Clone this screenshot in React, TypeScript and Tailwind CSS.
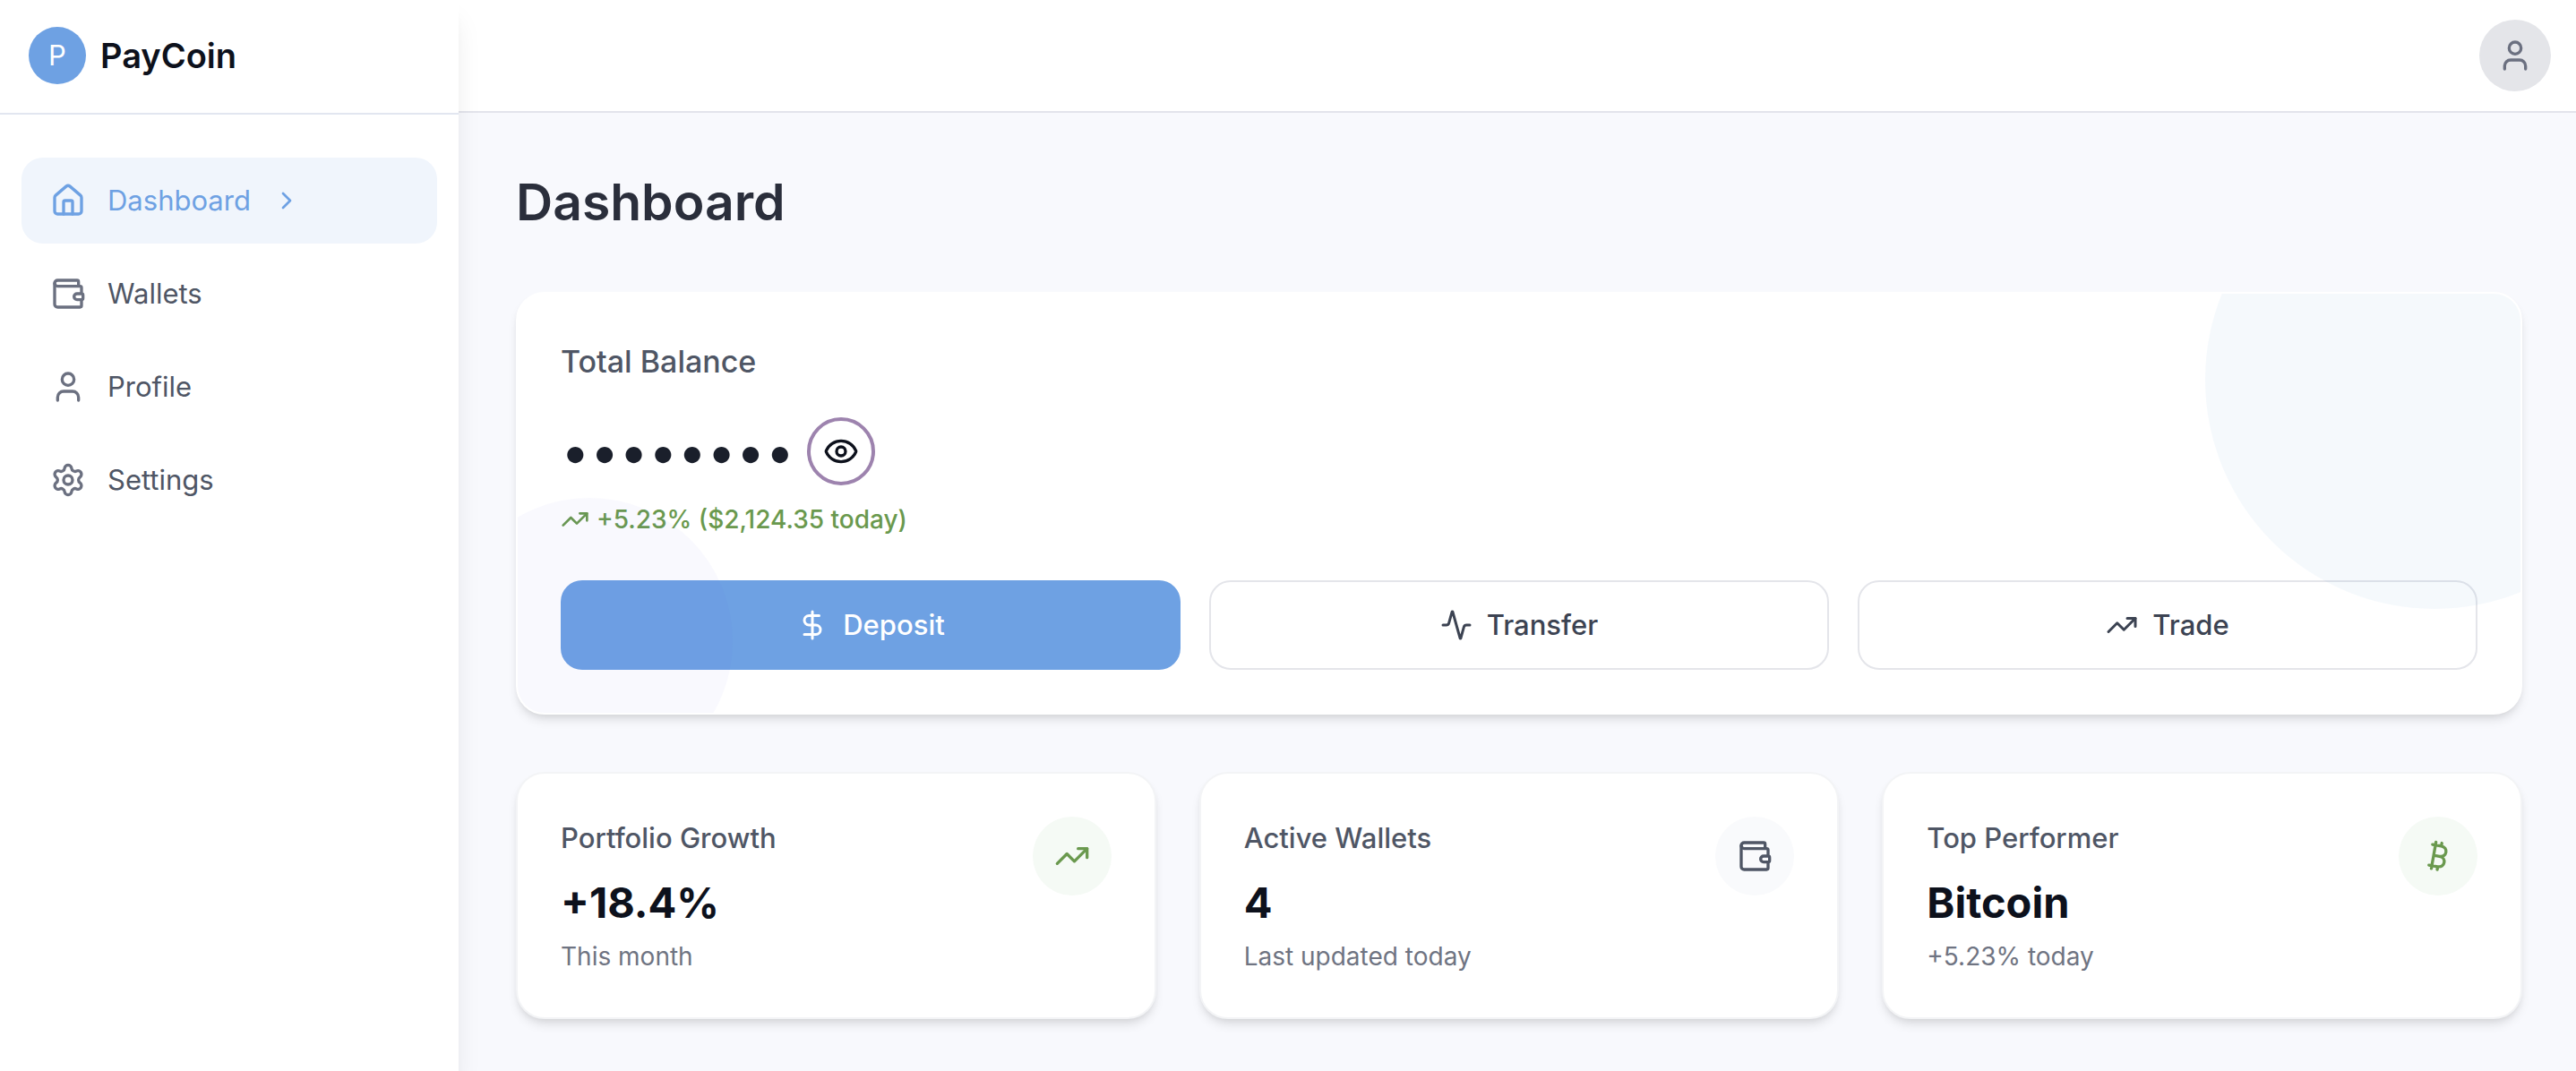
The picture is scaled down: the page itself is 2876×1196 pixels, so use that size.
import { useState } from "react";
import type { ReactNode } from "react";
import {
  Activity,
  Bitcoin,
  ChevronRight,
  DollarSign,
  Eye,
  House,
  Settings,
  TrendingUp,
  User,
  Wallet,
} from "lucide-react";
import type { LucideIcon } from "lucide-react";

type NavItem = { label: string; icon: LucideIcon; active?: boolean };

const navItems: NavItem[] = [
  { label: "Dashboard", icon: House, active: true },
  { label: "Wallets", icon: Wallet },
  { label: "Profile", icon: User },
  { label: "Settings", icon: Settings },
];

function NavLink({ label, icon: Icon, active }: NavItem) {
  return (
    <a
      href="#"
      aria-current={active ? "page" : undefined}
      className={
        active
          ? "flex h-24 items-center rounded-3xl bg-[#f0f5fc] px-8 text-[#6ea1e3]"
          : "flex h-24 items-center rounded-3xl px-8 text-[#4f5665]"
      }
    >
      <Icon className={active ? "size-10" : "size-10 text-[#6b7080]"} />
      <span className="ml-6 text-[31px] leading-12">{label}</span>
      {active && <ChevronRight className="ml-6 size-8" />}
    </a>
  );
}

function Sidebar() {
  return (
    <aside className="z-10 w-[512px] shrink-0 bg-white shadow-[0_20px_30px_-6px_rgba(0,0,0,0.1),0_8px_12px_-8px_rgba(0,0,0,0.1)]">
      <div className="flex items-center gap-4 border-b-2 border-[#e2e6f0] px-8 pt-[30px] pb-8">
        <span className="flex size-16 items-center justify-center rounded-full bg-[#6ea1e3] text-[31px] leading-12 text-white">
          P
        </span>
        <span className="text-[38px] leading-14 font-semibold text-[#0d111c]">PayCoin</span>
      </div>
      <nav className="flex flex-col gap-2 px-6 py-12">
        {navItems.map((item) => (
          <NavLink key={item.label} {...item} />
        ))}
      </nav>
    </aside>
  );
}

function ActionButton({
  icon: Icon,
  primary,
  children,
}: {
  icon: LucideIcon;
  primary?: boolean;
  children: ReactNode;
}) {
  return (
    <button
      type="button"
      className={
        primary
          ? "flex h-[100px] items-center justify-center gap-4 rounded-3xl bg-[#6ea1e3] text-[31px] leading-12 font-medium text-white"
          : "flex h-[100px] items-center justify-center gap-4 rounded-3xl border-2 border-[#e4e5ea] text-[31px] leading-12 font-medium text-[#3c4352]"
      }
    >
      <Icon className="size-9" />
      {children}
    </button>
  );
}

function BalanceCard() {
  const [hidden, setHidden] = useState(true);
  return (
    <section className="relative overflow-hidden rounded-[32px] border-2 border-white bg-white p-12 shadow-[0_8px_12px_-2px_rgba(0,0,0,0.1),0_4px_8px_-4px_rgba(0,0,0,0.1)]">
      <h2 className="text-[34px] leading-14 font-medium text-[#4f5665]">Total Balance</h2>
      <div className="mt-8 flex h-20 items-center gap-3.5">
        <span className="text-[58px] leading-20 text-[#1a1f2b]">
          {hidden ? "••••••••" : "$42,748.35"}
        </span>
        <button
          type="button"
          aria-label="Show balance"
          onClick={() => setHidden(!hidden)}
          className="flex size-[76px] items-center justify-center rounded-full border-4 border-[#9d83ae] text-[#0d111c]"
        >
          <Eye className="size-10" />
        </button>
      </div>
      <p className="mt-4 flex items-center gap-2 text-[28px] leading-10 font-medium text-[#6a994e]">
        <TrendingUp className="size-8" />
        +5.23% ($2,124.35 today)
      </p>
      <div className="mt-12 grid grid-cols-3 gap-8">
        <ActionButton icon={DollarSign} primary>
          Deposit
        </ActionButton>
        <ActionButton icon={Activity}>Transfer</ActionButton>
        <ActionButton icon={TrendingUp}>Trade</ActionButton>
      </div>
      <div className="pointer-events-none absolute -top-40 -right-40 size-[512px] rounded-full bg-[rgba(55,145,205,0.05)]" />
      <div className="pointer-events-none absolute -bottom-20 -left-20 size-80 rounded-full bg-[rgba(112,96,235,0.04)]" />
    </section>
  );
}

type Stat = {
  label: string;
  value: string;
  note: string;
  icon: LucideIcon;
  tone: "green" | "gray";
};

const stats: Stat[] = [
  { label: "Portfolio Growth", value: "+18.4%", note: "This month", icon: TrendingUp, tone: "green" },
  { label: "Active Wallets", value: "4", note: "Last updated today", icon: Wallet, tone: "gray" },
  { label: "Top Performer", value: "Bitcoin", note: "+5.23% today", icon: Bitcoin, tone: "green" },
];

function StatCard({ label, value, note, icon: Icon, tone }: Stat) {
  return (
    <section className="flex items-start justify-between rounded-[32px] border-2 border-[#f3f4f6] bg-white p-12 shadow-[0_8px_12px_-2px_rgba(0,0,0,0.1),0_4px_8px_-4px_rgba(0,0,0,0.1)]">
      <div>
        <h3 className="text-[31px] leading-12 font-medium text-[#4f5665]">{label}</h3>
        <p className="mt-4 text-[47px] leading-16 font-bold text-[#0d111c]">{value}</p>
        <p className="mt-2 text-[28px] leading-10 text-[#6f7482]">{note}</p>
      </div>
      <span
        className={
          tone === "green"
            ? "rounded-full bg-[#f5faf5] p-6 text-[#6a994e]"
            : "rounded-full bg-[#f9fafc] p-6 text-[#4f5665]"
        }
      >
        <Icon className="size-10" />
      </span>
    </section>
  );
}

export default function App() {
  return (
    <div className="flex min-h-screen bg-[#f8f9fd] font-['Inter',sans-serif]">
      <Sidebar />
      <div className="flex min-w-0 flex-1 flex-col">
        <header className="flex h-[126px] items-center justify-end border-b-2 border-[#e3e4ec] bg-white px-7">
          <button
            type="button"
            aria-label="Account"
            className="flex size-20 items-center justify-center rounded-full bg-[#e4e5e9] text-[#6b7080]"
          >
            <User className="size-10" />
          </button>
        </header>
        <main className="flex flex-col gap-16 py-16 pr-15 pl-16">
          <h1 className="text-[57px] leading-[72px] font-semibold text-[#2a2e3b]">Dashboard</h1>
          <BalanceCard />
          <div className="grid grid-cols-3 gap-12">
            {stats.map((stat) => (
              <StatCard key={stat.label} {...stat} />
            ))}
          </div>
        </main>
      </div>
    </div>
  );
}
